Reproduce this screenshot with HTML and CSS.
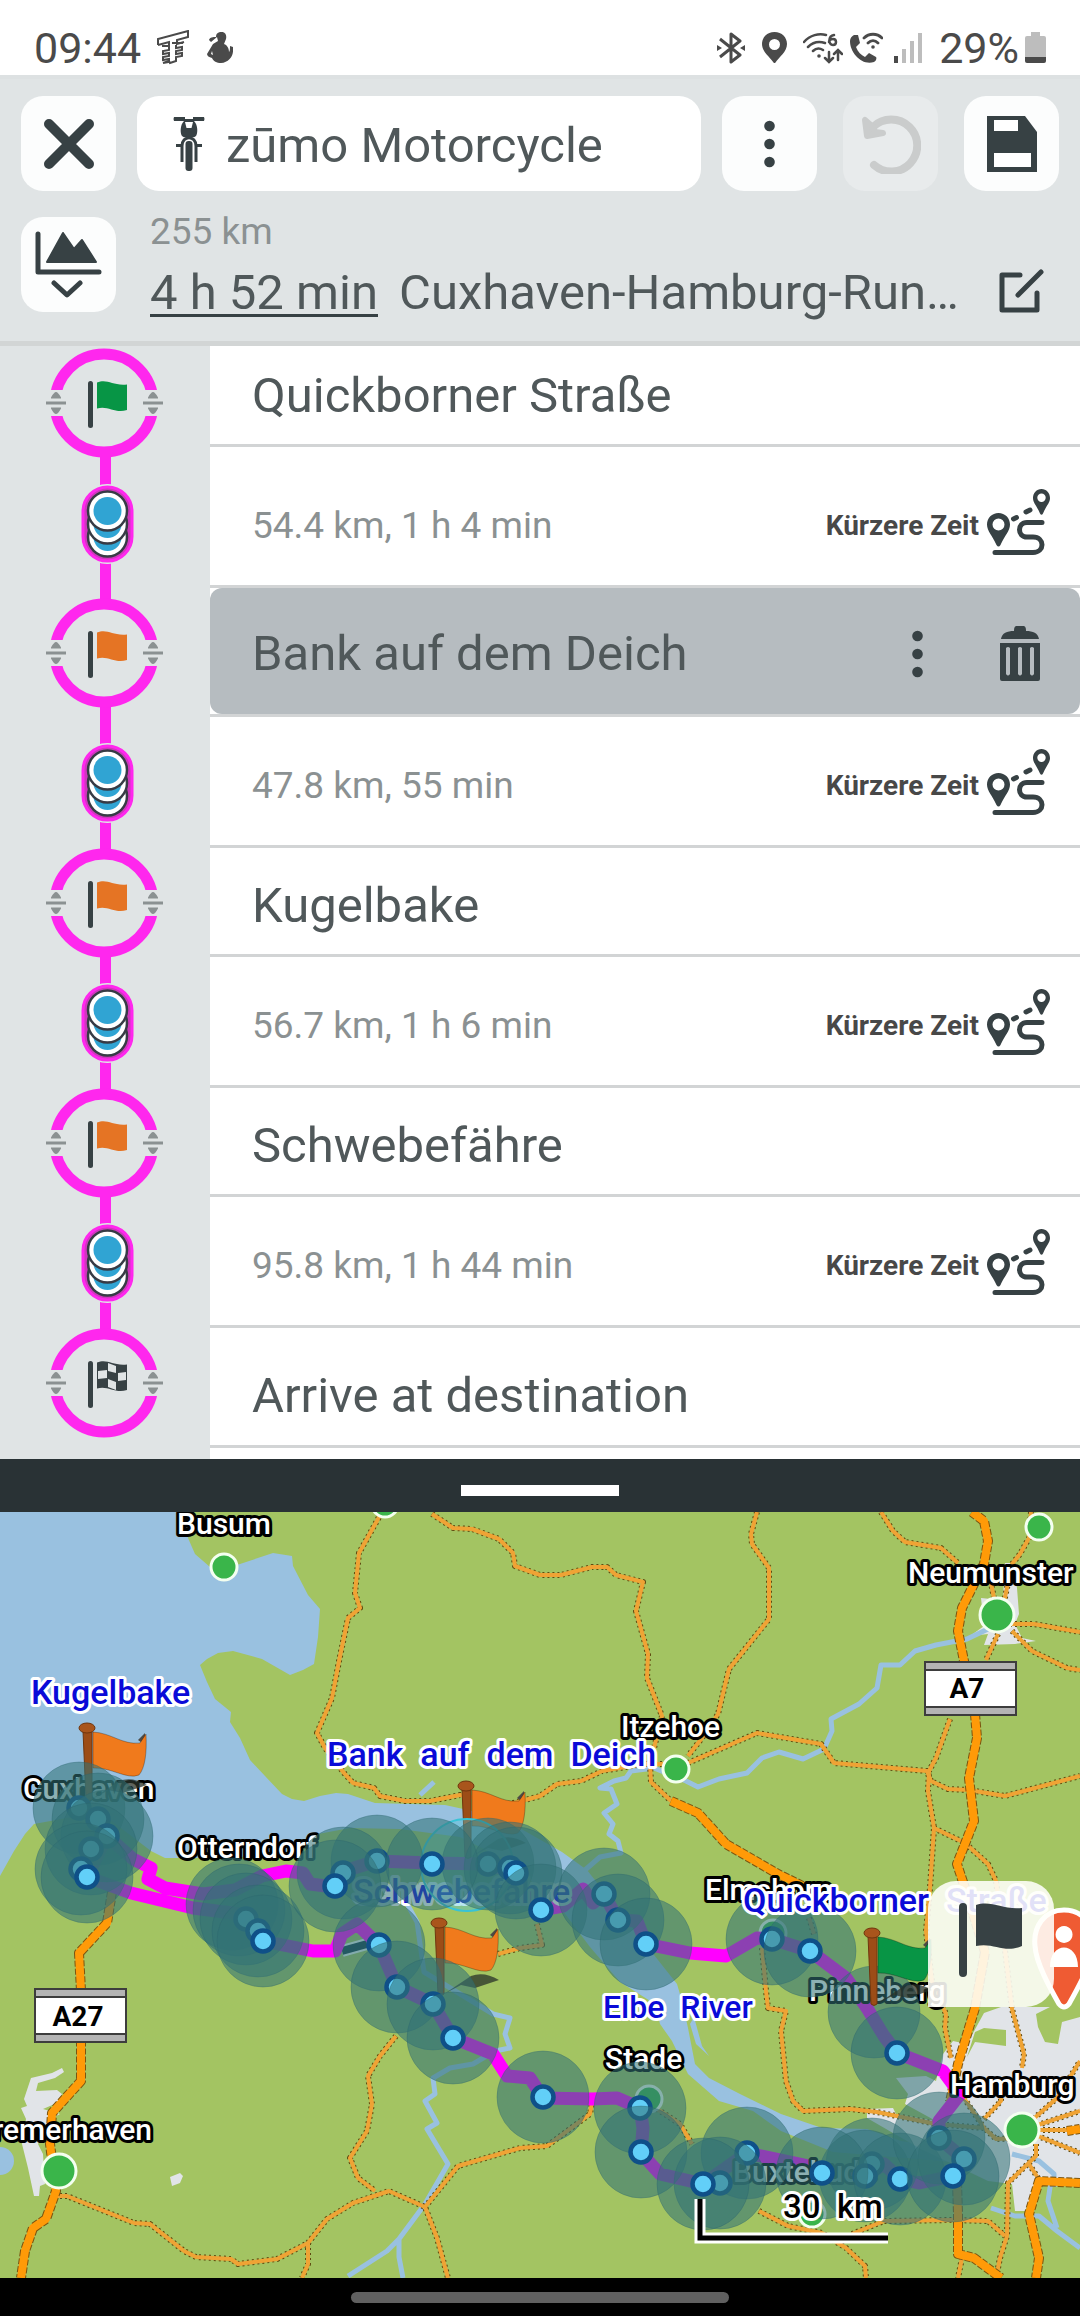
FILE: index.html
```html
<!DOCTYPE html>
<html lang="de">
<head>
<meta charset="utf-8">
<meta name="viewport" content="width=device-width, initial-scale=1">
<title>zūmo Motorcycle</title>
<link rel="stylesheet" href="styles.css">
</head>
<body>
<svg class="symbols" aria-hidden="true">
  <symbol id="stop" viewBox="0 0 118 110">
    <circle cx="59" cy="55" r="49" fill="#e0e4e5" stroke="#ff27ee" stroke-width="11"/>
    <path d="M0 42h26v26H0zM92 42h26v26H92z" fill="#e0e4e5"/>
    <g id="drag" fill="#8b9192">
      <path d="M1 53.500h20v3H1zM11 44q2 0 5 5.500v1H6v-1q3-5.500 5-5.500zM11 66q2 0 5-5.500v-1H6v1q3 5.500 5 5.500z"/>
    </g>
    <use href="#drag" x="97"/>
    <rect x="43" y="33" width="5" height="47" rx="2.500" fill="#374144"/>
  </symbol>
  <symbol id="pennant" viewBox="0 0 30 31">
    <path d="M0 1.500C11-2.500 15 5 30 3.500V29c-12 4-19-5-30-1.500z"/>
  </symbol>
  <symbol id="shaping" viewBox="0 0 55 80">
    <rect x="0" y="0" width="55" height="80" rx="27" fill="#e0e4e5"/>
    <rect x="3" y="3" width="49" height="74" rx="24.500" fill="#cf37bd" stroke="#ff27ee" stroke-width="3"/>
    <g stroke="#373b45" stroke-width="2.500" fill="#fff">
      <circle cx="27.500" cy="53" r="19.500"/><circle cx="27.500" cy="53" r="14" fill="#30a4d3" stroke="none"/>
      <circle cx="27.500" cy="40" r="19.500"/><circle cx="27.500" cy="40" r="14" fill="#30a4d3" stroke="none"/>
      <circle cx="27.500" cy="27" r="19.500"/><circle cx="27.500" cy="27" r="14" fill="#30a4d3" stroke="none"/>
    </g>
  </symbol>
  <symbol id="route" viewBox="0 0 64 66">
    <path fill-rule="evenodd" d="M11.500 24C5 24 0 29 0 35.500 0 42 5 46 9.500 56q2 3 4 0C18 46 23 42 23 35.500 23 29 18 24 11.500 24zm0 5.500a6 6 0 1 1 0 12 6 6 0 0 1 0-12zM54.500 0C49.500 0 46 4 46 9c0 5 4 8 7 15.500q1.500 2.500 3 0C59 17 63 14 63 9c0-5-3.500-9-8.500-9zm0 4.500a4.200 4.200 0 1 1 0 8.400 4.200 4.200 0 0 1 0-8.400z"/>
    <path fill="none" stroke="#374144" stroke-width="5" stroke-linecap="round" d="M55 33.500H40c-10 0-10 14.500 0 14.500h6c12 0 12 15.500 0 15.500H8M26.500 30l3-1.500M39 23l4-2"/>
  </symbol>
  <symbol id="dots" viewBox="0 0 11 48">
    <circle cx="5.500" cy="6" r="5.300"/><circle cx="5.500" cy="24" r="5.300"/><circle cx="5.500" cy="42" r="5.300"/>
  </symbol>
</svg>

<header class="status">
  <div class="status-side">
    <span class="clock">09:44</span>
    <svg class="s-tt" viewBox="0 0 32 36"><path fill="none" stroke="#4a4a4a" stroke-width="2" d="M1 15v-6L31 1v6l-11 3v4l7-2M1 15l11-3v4H5m7 0v4l-6 1v3l6-1v3l-6 1v3l6-1v3l-6 1m9-20h11m-7 2v3l6-1v3l-6 1v3l6-1v3l-6 1v4l-6 2-1-2-6 2"/></svg>
    <svg class="s-run" viewBox="0 0 26 31"><path fill="#4a4a4a" d="M13 0c5-1 7 3 6 7l-2 5c3 1 5 4 5 8 1-1 1-4 1-6l3 1c1 8-3 15-12 16-4 0-8-2-9-5-3-1-5-2-5-4l6-10 5-3-1-4-6 5-2-2c1-3 4-3 7-3 0-3 1-4 4-5zM5 19l-1 3 2 1z"/></svg>
  </div>
  <div class="status-side">
    <svg class="s-bt" viewBox="0 0 28 32"><path fill="none" stroke="#4a4a4a" stroke-width="3" stroke-linejoin="round" d="M3 7l20 16-9 7V2l9 7L3 25"/><path fill="#4a4a4a" d="M0 13l5 3-5 3zM28 13l-5 3 5 3z"/></svg>
    <svg class="s-pin" viewBox="0 0 25 31"><path fill="#4a4a4a" fill-rule="evenodd" d="M12.500 0C5 0 0 5.500 0 12c0 8 8 13 11.500 18.500q1 1 2 0C17 25 25 20 25 12 25 5.500 20 0 12.500 0zm0 7a5.500 5.500 0 1 1 0 11 5.500 5.500 0 0 1 0-11z"/></svg>
    <svg class="s-wifi" viewBox="0 0 40 32"><path fill="none" stroke="#4a4a4a" stroke-width="2.500" stroke-linecap="round" d="M1 10C7 3 16 1 23 3M5 15c5-5 11-6 17-4M10 19c3-3 7-3 10-1M31 3c-6 1-6 10-1 10 4 0 4-6 0-6-3 0-4 2-4 3M26 20v9m-4-3l4 4 4-4M35 28v-9m-4 3l4-4 4 4"/><circle cx="16" cy="24" r="1.800" fill="#4a4a4a"/></svg>
    <svg class="s-call" viewBox="0 0 33 31"><path fill="#4a4a4a" d="M4 3l4 0 2 8-4 4c2 5 5 8 9 10l4-4 7 4c1 1 0 4-2 5-12 4-24-9-24-21 0-3 2-5 4-6z"/><path fill="none" stroke="#4a4a4a" stroke-width="2.800" stroke-linecap="round" d="M14 6c5-5 13-5 18 0M18 11c3-3 7-3 10 0"/><circle cx="23" cy="15" r="1.800" fill="#4a4a4a"/></svg>
    <svg class="s-sig" viewBox="0 0 28 31"><path fill="#4a4a4a" d="M0 24h4v7H0z"/><path fill="#bdbdbd" d="M8 17h4v14H8zM16 9h4v22h-4zM24 1h4v30h-4z"/></svg>
    <span class="battery-text">29%</span>
    <svg class="s-bat" viewBox="0 0 21 31"><path fill="#bdbdbd" d="M6 0h9v4h4q2 0 2 2v19H0V6q0-2 2-2h4z"/><path fill="#4a4a4a" d="M0 25h21v4q0 2-2 2H2q-2 0-2-2z"/></svg>
  </div>
</header>

<section class="toolbar">
  <div class="tools">
    <button class="tile" aria-label="Schließen"><svg width="52" height="52" viewBox="0 0 52 52"><path stroke="#374144" stroke-width="10" stroke-linecap="round" d="M6 6l40 40M46 6L6 46"/></svg></button>
    <button class="profile">
      <svg width="32" height="54" viewBox="0 0 32 54"><path fill="#374144" d="M1 0h11v2h8V0h11q1 2 0 4H21c4 4 4 12 2 15-2 2-4 1-7 1s-5 1-7-1C7 16 7 8 11 4H1Q0 2 1 0z"/><path fill="#fff" d="M12 5h8l-1.500 6h-5z"/><rect x="12.500" y="24" width="7" height="30" rx="3" fill="#374144"/><path fill="none" stroke="#374144" stroke-width="3" d="M9 45V29c0-11 14-11 14 0v16M3 28.500h6M23 28.500h6"/></svg>
      <span>zūmo Motorcycle</span>
    </button>
    <div class="actions">
      <button class="tile" aria-label="Mehr"><svg class="ink" width="11" height="48"><use href="#dots"/></svg></button>
      <button class="tile tile-off" aria-label="Rückgängig" disabled><svg width="60" height="60" viewBox="0 0 60 60"><path fill="none" stroke="#cacccc" stroke-width="8" stroke-linecap="round" d="M13 51a26 26 0 1 0-1-38"/><path fill="#cacccc" stroke="#cacccc" stroke-width="6" stroke-linejoin="round" d="M4 6l2 16 16-3-8-1-2-5z"/></svg></button>
      <button class="tile" aria-label="Speichern"><svg width="50" height="56" viewBox="0 0 50 56"><path fill="#374144" d="M0 0h38l12 16v40H0z"/><path fill="#fff" d="M7 4h24v11H7zM7 37h37v14H7z"/></svg></button>
    </div>
  </div>
  <div class="summary">
    <button class="tile" aria-label="Höhenprofil"><svg width="67" height="67" viewBox="0 0 67 67"><path fill="none" stroke="#374144" stroke-width="5" stroke-linecap="round" stroke-linejoin="round" d="M3 3v38h61M19 52l13 12 13-12"/><path fill="#374144" stroke="#374144" stroke-width="2" stroke-linejoin="round" d="M12 31L28 2l11 16 8-9 14 22z"/></svg></button>
    <div class="totals">
      <div class="distance">255 km</div>
      <div class="trip"><a class="duration" href="#">4 h 52 min</a><h1 class="trip-name">Cuxhaven-Hamburg-Rundfahrt Elbe</h1></div>
    </div>
    <button class="plain" aria-label="Bearbeiten"><svg width="46" height="44" viewBox="0 0 46 44"><path fill="none" stroke="#374144" stroke-width="5" stroke-linecap="round" stroke-linejoin="round" d="M21 6H3v35h35V24M42 3L19 26"/></svg></button>
  </div>
</section>

<main>
<ol class="itinerary">
  <li class="row name first">
    <div class="gutter"><svg class="stop" width="118" height="110"><use href="#stop"/><use href="#pennant" x="52" y="33" width="30" height="31" fill="#079545"/></svg></div>
    <div class="cell">Quickborner Straße</div>
  </li>
  <li class="row leg long">
    <div class="gutter"><svg class="chip" width="55" height="80"><use href="#shaping"/></svg></div>
    <div class="cell"><span>54.4 km, 1 h 4 min</span><button class="mode">Kürzere Zeit<svg class="ink" width="64" height="66"><use href="#route"/></svg></button></div>
  </li>
  <li class="row name tall">
    <div class="gutter"><svg class="stop" width="118" height="110"><use href="#stop"/><use href="#pennant" x="52" y="33" width="30" height="31" fill="#e57424"/></svg></div>
    <div class="cell cell-on"><div class="picked"><span>Bank auf dem Deich</span>
      <button class="plain" aria-label="Optionen"><svg class="ink" width="11" height="48"><use href="#dots"/></svg></button>
      <button class="plain" aria-label="Löschen"><svg width="40" height="55" viewBox="0 0 40 55"><path fill="#374144" fill-rule="evenodd" d="M14 5c0-4 1-5 3-5h6c2 0 3 1 3 5 7 0 12 2 13 8H1c1-6 6-8 13-8zM0 17h40v36q0 2-2 2H2q-2 0-2-2zm6 5v26q2 3 4 0V22q-2-2-4 0zm12 0v26q2 3 4 0V22q-2-2-4 0zm12 0v26q2 3 4 0V22q-2-2-4 0z"/></svg></button>
    </div></div>
  </li>
  <li class="row leg">
    <div class="gutter"><svg class="chip" width="55" height="80"><use href="#shaping"/></svg></div>
    <div class="cell"><span>47.8 km, 55 min</span><button class="mode">Kürzere Zeit<svg class="ink" width="64" height="66"><use href="#route"/></svg></button></div>
  </li>
  <li class="row name">
    <div class="gutter"><svg class="stop" width="118" height="110"><use href="#stop"/><use href="#pennant" x="52" y="33" width="30" height="31" fill="#e57424"/></svg></div>
    <div class="cell">Kugelbake</div>
  </li>
  <li class="row leg">
    <div class="gutter"><svg class="chip" width="55" height="80"><use href="#shaping"/></svg></div>
    <div class="cell"><span>56.7 km, 1 h 6 min</span><button class="mode">Kürzere Zeit<svg class="ink" width="64" height="66"><use href="#route"/></svg></button></div>
  </li>
  <li class="row name">
    <div class="gutter"><svg class="stop" width="118" height="110"><use href="#stop"/><use href="#pennant" x="52" y="33" width="30" height="31" fill="#e57424"/></svg></div>
    <div class="cell">Schwebefähre</div>
  </li>
  <li class="row leg">
    <div class="gutter"><svg class="chip" width="55" height="80"><use href="#shaping"/></svg></div>
    <div class="cell"><span>95.8 km, 1 h 44 min</span><button class="mode">Kürzere Zeit<svg class="ink" width="64" height="66"><use href="#route"/></svg></button></div>
  </li>
  <li class="row name last">
    <div class="gutter"><svg class="stop" width="118" height="110"><use href="#stop"/><use href="#pennant" x="52" y="33" width="30" height="31" fill="#374144"/><path fill="#e0e4e5" d="M63 35l8 3v7l-8-2zM53 43l9-1v8l-9 1zM73 45l8-1v8l-8 1zM63 51l8 3v8l-8-3z"/></svg></div>
    <div class="cell">Arrive at destination</div>
  </li>
</ol>

<div class="splitter"><span class="grip"></span></div>

<div class="map">
<svg class="map-art" viewBox="0 0 1080 766" role="img" aria-label="Karte">
  <defs>
    <g id="minor">
      <path d="M385-8L378 7 359 41 355 81 360 96 348 106 339 149 332 186 317 221 325 236 344 261 353 271 374 276 380 284 405 289 430 289 460 283 510 292 540 284 557 272 581 269 602 259 643 252 676 252"/>
      <path d="M432 2L453 16 472 17 499 27 513 41 515 54 540 63 561 63 592 55 607 55 616 63 643 70 636 99 648 142 647 166 662 204 650 252 651 270 671 289"/>
      <path d="M757 0L751 22 752 32 769 56 769 107 729 157 718 202 702 226 688 244"/>
      <path d="M688 251L757 221 821 232 834 251 927 259 931 269 948 277 969 278 1005 284 1080 264"/>
      <path d="M950 207L936 246 929 259 928 279 934 316 930 376 926 419 932 470 946 502 945 516 951 546"/>
      <path d="M934 316L965 331 988 352 996 369 1004 430 1012 497 1024 542 1022 556"/>
      <path d="M881 0L893 19 905 30 941 36 958 51"/>
      <path d="M1031 0L1029 26 1020 42 1012 52 1004 90"/>
      <path d="M1005 112H1034L1080 120M1012 119L1032 139 1067 156 1080 158M998 122L986 148M994 86L991 71"/>
      <path d="M55 684H67L134 711 150 712 184 739 196 745 231 747 238 752 277 747 308 731 327 707 353 691 389 679 425 695 437 726 448 766"/>
      <path d="M396 524L380 544 368 564 372 592 367 619 350 646 358 666 375 679M308 731V752L302 766"/>
      <path d="M425 695L458 654 520 636 547 634 590 602 592 590"/>
      <path d="M498 442L520 436 542 433 537 412M657 597L680 612 692 632"/>
      <path d="M762 436L766 479 768 496 786 499 781 519 786 569 793 589 803 599 850 597 877 600 936 612 984 616 996 627 1022 626"/>
      <path d="M809 406L814 422M759 699L788 714 822 721 846 736 865 754 866 766M852 722L884 709 953 708 988 709 1005 724"/>
      <path d="M1036 632V644L1008 671 1007 724 1000 746 996 766"/>
      <path d="M1023 618L1080 599M1023 618L1080 641M1023 618H1067M1030 610L1057 586 1080 549M984 607L1001 589V575M964 586L984 616M962 746L958 766M1029 652L1038 666"/>
    </g>
    <g id="major">
      <path d="M112 380L107 411 79 441 81 479V569L52 601 50 632 56 679 46 707 33 716 25 739 21 766"/>
      <path d="M972 0L984 9 988 29 984 52 962 96 958 119 964 149 975 202 977 226 969 266 974 309 957 352 965 376 985 440 975 496 958 552 950 590"/>
      <path d="M957 670L958 702V742L974 746 1001 766M1080 671L1039 669 1029 702 1039 746 1036 766M1067 619L1080 617"/>
      <path d="M671 289L698 301 726 332 778 362 815 380"/>
    </g>
    <g id="wp">
      <circle r="46" fill="#327276" fill-opacity=".56" stroke="#2a646c" stroke-opacity=".35"/>
      <circle r="10.500" fill="#62cff8" stroke="#0f5088" stroke-width="4.500"/>
    </g>
    <g id="zone"><circle r="46" fill="#327276" fill-opacity=".56" stroke="#2a646c" stroke-opacity=".35"/></g>
    <g id="mapflag">
      <path fill="#28322a" fill-opacity=".75" d="M5 71L32 53Q45 48 60 57L36 65 22 62z"/>
      <path fill="#9c4d17" stroke="#70360e" d="M-4 3H5V71q-3 3-6 0z"/>
      <ellipse cx="0" cy="0" rx="8" ry="5" fill="#a9551c" stroke="#70360e"/>
      <path fill="#4d4a45" d="M51 12l7-7v12z"/>
      <path stroke="#0004" d="M6 4C25 5 35 17 53 15L59 6C60 25 58 40 52 47 40 52 24 39 6 40z"/>
    </g>
    <g id="shield"><path fill="#fff" stroke="#3d3d3d" stroke-width="2" d="M1 1h91v53H1z"/><path fill="#b4b4b4" stroke="#3d3d3d" stroke-width="2" d="M1 1h91v8H1zM1 46h91v8H1z"/></g>
  </defs>

  <path fill="#a3c462" d="M0 0h1080v766H0z"/>
  <path fill="#99c1e0" d="M0 0H186L188 26 195 42 210 55 224 57 240 52 273 41 292 44 293 54 308 83 320 97 318 125 314 152 303 158 290 163 262 147 233 139 218 141 207 147 200 153 207 170 215 187 231 200 230 210 240 226 250 248 265 264 282 282 292 287 304 289 320 284 336 281 348 282 375 291 445 293 500 305 562 340 587 358 620 400 677 472 682 489 688 516 695 552 709 566 740 582 781 602 822 616 867 617 901 629 953 636 988 639 1015 644 953 650 833 640 781 619 753 599 719 589 688 562 672 529 660 512 655 492 620 470 590 435 560 395 510 350 460 325 400 317 350 316 318 322 290 342 220 346 165 346 151 339 100 300 34 312 25 322 14 339 0 364z"/>
  <path fill="#99c1e0" d="M690 512L696 532 709 544 702 534 694 505z"/>
  <circle cx="0" cy="649" r="14" fill="#99c1e0"/>
  <path fill="#e1e4e8" d="M31 566L52 561 62 556 64 560 55 566 38 571 36 579 57 578 62 582 57 591 43 597 60 602 52 606 38 632 43 642 45 672 40 674 39 684H34L28 656 22 632 26 607 21 596 27 594 24 587zM170 665L180 661 183 664 180 671 172 674zM1005 51H1012L1017 76 1019 102 1015 112 1022 126 1036 129 1015 132 984 133 988 122 970 124 984 114 981 86 991 87 1003 86z"/>
  <path fill="#e1e4e8" d="M953 529L967 532 984 501 1001 495H1080V666L1039 669 1025 699H1015L1012 672 988 669 919 636 867 606V597L893 596 896 602 936 609 905 592 908 582 896 566 926 564 936 569 943 542z"/>
  <path fill="#a3c462" d="M967 545L975 530 1006 534V518L984 516 975 520zM1036 502L1050 495H1080V505L1062 510 1058 532 1045 530 1038 515z"/>
  <path class="river" d="M988 117L967 127 936 133 915 139 900 153 881 153 877 176 859 192 831 207 832 219 824 237 803 247 779 240 762 246 747 261 719 267 698 275 686 269 654 256 631 259 626 266 614 269 600 276 611 277 617 292 604 301 613 312 609 322 618 329 621 341 600 345 585 358"/>
  <path class="river" d="M434 270L420 283M405 388L417 410 424 460 493 502 510 506 505 522 510 536 495 539 473 552 450 556 433 566 435 582 425 589 437 611 427 617 448 652 425 692 399 727 387 739 348 764M399 727V745L403 766"/>
  <path class="river" d="M991 696L1015 704H1039L1057 719 1080 736M1051 669L1048 689 1057 716M1012 642L1039 649 1054 662V675"/>

  <use href="#minor" class="minor-edge"/><use href="#minor" class="minor-fill"/>
  <use href="#major" class="major-edge"/><use href="#major" class="major-fill"/>

  <g fill="#3ab54a" stroke="#f4fff0" stroke-width="3">
    <circle cx="224" cy="55" r="13"/><circle cx="385" cy="-8" r="13"/><circle cx="1039" cy="15" r="13"/><circle cx="997" cy="103" r="17"/><circle cx="676" cy="257" r="13"/><circle cx="59" cy="659" r="17"/><circle cx="1022" cy="618" r="17"/><circle cx="649" cy="587" r="13"/><circle cx="773" cy="421" r="13"/><circle cx="812" cy="702" r="13"/>
  </g>

  <path fill="none" stroke="#e8f4f4" stroke-width="12" d="M342 439L367 432"/>
  <path fill="none" stroke="#12394a" stroke-width="8" d="M342 439L367 432"/>
  <path class="track" d="M87 365L107 324 133 347 151 356 148 367 165 376 203 382 235 378 262 364 286 359 303 361 310 372 334 375 344 359 377 349 431 351 489 352 515 361 541 398 563 394 583 377 593 391 604 382 618 408 637 409 646 432 690 441 726 444 757 426 772 427 810 439 846 466 867 496 884 524 897 541 943 559 960 582 939 609V626L964 647 953 664 919 671 900 667 884 652 865 664 822 661 809 654 747 641 703 672 660 662 641 641 643 616 640 596 617 586 592 587 543 586 530 566 507 564 493 542 453 526 433 492 397 475 379 433 357 412 342 422 335 439 313 439 263 429 240 402 193 396 131 381 87 365"/>

  <g class="town">
    <text x="177" y="22">Busum</text><text x="23" y="287">Cuxhaven</text><text x="177" y="346">Otterndorf</text>
    <text x="621" y="225">Itzehoe</text><text x="908" y="71">Neumunster</text><text x="705" y="388">Elmshorn</text>
    <text x="605" y="557">Stade</text><text x="809" y="489">Pinneberg</text><text x="733" y="670">Buxtehude</text>
    <text x="950" y="583">Hamburg</text><text x="152" y="628" text-anchor="end">Bremerhaven</text>
  </g>
  <g class="place"><text x="353" y="391">Schwebefähre</text></g>
  <use href="#mapflag" x="87" y="216" fill="#f07a1c"/>
  <use href="#mapflag" x="466" y="274" fill="#f07a1c"/>
  <use href="#mapflag" x="439" y="411" fill="#f07a1c"/>
  <circle cx="467" cy="353" r="46" fill="#4fc3d8" fill-opacity=".4" stroke="#38c3d6" stroke-width="2"/>

  <use href="#wp" x="79" y="296"/><use href="#wp" x="98" y="307"/><use href="#wp" x="107" y="324"/><use href="#wp" x="91" y="337"/><use href="#wp" x="81" y="357"/><use href="#wp" x="87" y="365"/>
  <use href="#zone" x="232" y="392"/><use href="#zone" x="239" y="398"/><use href="#wp" x="246" y="407"/><use href="#wp" x="258" y="419"/><use href="#wp" x="263" y="429"/>
  <use href="#wp" x="377" y="349"/><use href="#wp" x="343" y="361"/><use href="#wp" x="335" y="374"/>
  <use href="#wp" x="488" y="352"/><use href="#wp" x="510" y="356"/><use href="#wp" x="516" y="361"/><use href="#wp" x="432" y="352"/><use href="#wp" x="541" y="398"/>
  <use href="#wp" x="604" y="382"/><use href="#wp" x="618" y="408"/><use href="#wp" x="646" y="432"/>
  <use href="#wp" x="379" y="433"/><use href="#wp" x="397" y="475"/><use href="#wp" x="433" y="492"/><use href="#wp" x="453" y="526"/>
  <use href="#wp" x="543" y="585"/><use href="#wp" x="640" y="596"/><use href="#wp" x="641" y="640"/>
  <use href="#wp" x="747" y="641"/><use href="#wp" x="720" y="671"/><use href="#wp" x="703" y="672"/>
  <use href="#wp" x="872" y="652"/><use href="#wp" x="865" y="664"/><use href="#wp" x="822" y="661"/><use href="#wp" x="900" y="667"/>
  <use href="#wp" x="939" y="626"/><use href="#wp" x="964" y="647"/><use href="#wp" x="953" y="664"/>
  <use href="#wp" x="772" y="427"/><use href="#wp" x="810" y="439"/><use href="#zone" x="874" y="500"/><use href="#wp" x="897" y="541"/>
  <use href="#mapflag" x="872" y="421" fill="#089545"/>

  <g class="place">
    <text x="31" y="192">Kugelbake</text><text x="327" y="254">Bank  auf  dem  Deich</text>
    <text x="743" y="400">Quickborner  Straße</text><text x="603" y="506" class="water">Elbe  River</text>
  </g>
  <use href="#shield" x="924" y="149"/><text class="road-no" x="967" y="186">A7</text>
  <use href="#shield" x="34" y="476"/><text class="road-no" x="78" y="514">A27</text>
  <path fill="none" stroke="#fff" stroke-width="11" d="M700 687V726H888"/>
  <path fill="none" stroke="#000" stroke-width="5" d="M700 687V726H888"/>
  <text class="scale" x="783" y="706">30  km</text>
  <path fill="#ef5b33" stroke="#fff" stroke-width="5" d="M1064 398c-20 0-31 17-29 36 1 17 15 42 24 58q5 6 10 0c9-16 23-41 24-58 2-19-9-36-29-36z"/>
  <path fill="#fff" d="M1064 414a8.500 8.500 0 1 0 .1 0zM1050 455c0-26 28-26 28 0z"/>
</svg>
<button class="map-flag" aria-label="Ziel setzen"><svg width="64" height="74" viewBox="0 0 64 74"><rect width="8" height="74" rx="4" fill="#374144"/><path fill="#374144" d="M17 2c16-5 26 5 46 3v38c-18 8-28-4-46 0z"/></svg></button>
</div>
</main>
<footer class="nav"><span class="pill"></span></footer>
</body>
</html>
```
FILE: styles.css
```css
* { box-sizing: border-box; }
body { margin: 0; background: #000; font-family: Roboto, "Noto Sans", sans-serif; color: #50585a; }
svg { display: block; flex: none; }
button { font: inherit; color: inherit; border: 0; padding: 0; background: none; display: flex; align-items: center; }
.symbols { position: absolute; width: 0; height: 0; }
.ink { fill: #374144; }

.status { height: 75px; padding: 20px 34px 0 34px; background: #fff; display: flex; justify-content: space-between; color: #4a4a4a; font-size: 43px; line-height: 56px; }
.status-side { display: flex; align-items: center; }
.clock { margin-right: 16px; }
.s-tt { width: 32px; height: 36px; margin-right: 18px; }
.s-run { width: 26px; height: 31px; }
.s-bt { width: 28px; height: 32px; margin-right: 17px; }
.s-pin { width: 25px; height: 31px; margin-right: 16px; }
.s-wifi { width: 40px; height: 32px; margin-right: 7px; }
.s-call { width: 33px; height: 31px; margin-right: 11px; }
.s-sig { width: 28px; height: 31px; margin-right: 17px; }
.s-bat { width: 21px; height: 31px; margin-left: 6px; }

.toolbar { background: #e0e4e5; border-top: 4px solid #dde1e2; border-bottom: 5px solid #d2d5d5; padding: 17px 21px 20px; }
.tools, .summary { display: flex; gap: 21px; }
.summary { margin-top: 26px; }
.tile { width: 95px; height: 95px; flex: none; border-radius: 22px; background: #fcfdfd; justify-content: center; }
.tile-off { background: #e8ebec; }
.actions { display: flex; gap: 26px; }
.profile { flex: 1; background: #fff; border-radius: 22px; padding-left: 36px; gap: 21px; font-size: 49px; }
.profile span { padding-top: 4px; }
.totals { flex: 1; min-width: 0; padding-left: 13px; }
.distance { font-size: 37px; line-height: 44px; margin-top: -7px; color: #8b9192; }
.trip { display: flex; gap: 21px; font-size: 49px; line-height: 56px; margin-top: 11px; }
.duration { color: inherit; flex: none; text-decoration: none; border-bottom: 3px solid #374144; height: 52px; }
.trip-name { margin: 0; font-size: inherit; font-weight: 400; min-width: 0; white-space: nowrap; overflow: hidden; text-overflow: ellipsis; }
.summary .plain { padding: 52px 14px 0 18px; height: 96px; }

.itinerary { list-style: none; margin: 0; padding: 0 0 11px; background: linear-gradient(90deg, #e0e4e5 210px, #fff 210px); }
.row { display: flex; height: 109px; }
.leg { height: 131px; }
.long { height: 141px; }
.tall { height: 129px; }
.first { height: 101px; }
.last { height: 120px; }
.gutter { width: 210px; flex: none; display: flex; align-items: center; background: linear-gradient(#ff27ee, #ff27ee) 100px 0 / 11px 100% no-repeat; }
.stop { margin-left: 45px; }
.chip { margin-left: 80px; }
.long .gutter { padding-top: 13px; }
.first .gutter { align-items: flex-start; padding-top: 2px; background-position: 100px 100%; background-size: 11px 50%; }
.last .gutter { align-items: flex-start; background-size: 11px 50%; }
.cell { flex: 1; min-width: 0; border-bottom: 3px solid #d2d4d5; padding: 8px 29px 0 42px; display: flex; align-items: center; justify-content: space-between; font-size: 49px; }
.leg .cell { font-size: 37px; color: #8b9192; }
.first .cell { padding-top: 0; }
.long .cell { padding-top: 18px; }
.last .cell { padding-top: 18px; }
.mode { gap: 8px; font-size: 28px; font-weight: 700; color: #484848; }
.mode svg { margin-bottom: 6px; }
.cell-on { padding: 0; align-items: stretch; }
.picked { flex: 1; display: flex; align-items: center; background: #b6bcc0; border-radius: 12px; padding: 5px 40px 0 42px; }
.picked span { flex: 1; }
.picked .plain + .plain { margin-left: 77px; }

.splitter { height: 53px; background: #293235; display: flex; justify-content: center; align-items: flex-end; padding-bottom: 16px; }
.grip { width: 158px; height: 11px; background: #fff; }

.map { position: relative; }
.map-art { width: 100%; height: auto; overflow: hidden; }
.map-flag { position: absolute; right: 26px; top: 369px; width: 126px; height: 126px; justify-content: center; padding-bottom: 8px; background: #fffffbe0; border-radius: 28px 28px 28px 0; }
.river { fill: none; stroke: #99c1e0; stroke-width: 5px; stroke-linejoin: round; }
.minor-edge, .minor-fill, .major-edge, .major-fill { fill: none; stroke-linejoin: round; }
.minor-edge { stroke: #5f4a10; stroke-width: 6px; stroke-dasharray: 2 3; }
.minor-fill { stroke: #efa335; stroke-width: 4px; }
.major-edge { stroke: #7a5410; stroke-width: 10px; stroke-dasharray: 6 2; }
.major-fill { stroke: #ff9a08; stroke-width: 8px; }
.track { fill: none; stroke: #f0f; stroke-width: 13px; stroke-linejoin: round; }
.map-art text { font-weight: 500; white-space: pre; paint-order: stroke; stroke-linejoin: round; }
.town { font-size: 30px; fill: #fff; stroke: #000; stroke-width: 6px; }
.place { font-size: 34px; fill: #0a0ad8; stroke: #fff; stroke-width: 6px; }
.water { font-size: 32px; }
.scale { font-size: 33px; fill: #000; stroke: #fff; stroke-width: 6px; }
.map-art .road-no { font-size: 28px; font-weight: 700; text-anchor: middle; fill: #000; }

.nav { height: 39px; background: #000; display: flex; justify-content: center; padding-top: 14px; }
.pill { width: 35%; height: 11px; border-radius: 6px; background: #606060; }
```
